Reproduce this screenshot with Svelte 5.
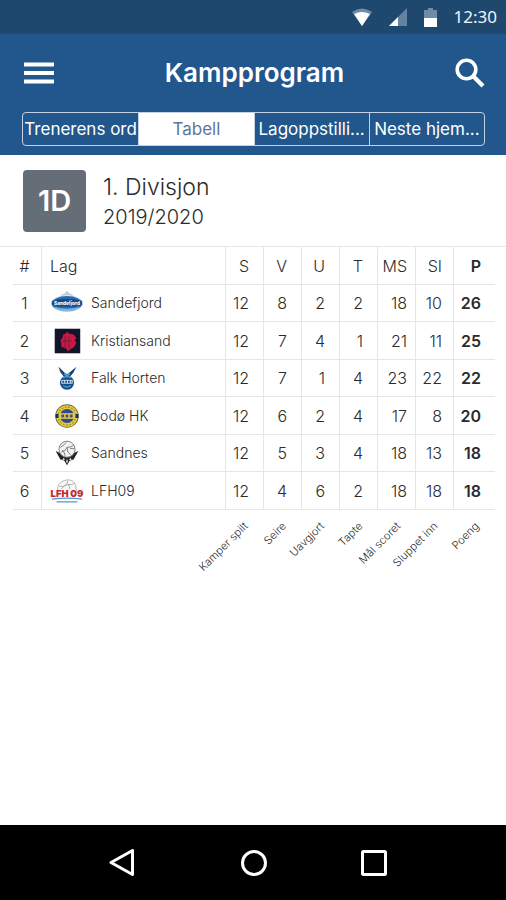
<script>
  let active = $state('Tabell');
  const tabs = ['Trenerens ord', 'Tabell', 'Lagoppstilli...', 'Neste hjem...'];
  const columns = [
    ['S', 'Kamper spilt'],
    ['V', 'Seire'],
    ['U', 'Uavgjort'],
    ['T', 'Tapte'],
    ['MS', 'Mål scoret'],
    ['SI', 'Sluppet inn'],
    ['P', 'Poeng']
  ];
  const teams = [
    { name: 'Sandefjord', stats: [12, 8, 2, 2, 18, 10, 26] },
    { name: 'Kristiansand', stats: [12, 7, 4, 1, 21, 11, 25] },
    { name: 'Falk Horten', stats: [12, 7, 1, 4, 23, 22, 22] },
    { name: 'Bodø HK', stats: [12, 6, 2, 4, 17, 8, 20] },
    { name: 'Sandnes', stats: [12, 5, 3, 4, 18, 13, 18] },
    { name: 'LFH09', stats: [12, 4, 6, 2, 18, 18, 18] }
  ];
</script>

{#snippet crest(i)}
  <svg class="crest" viewBox="0 0 36 28" aria-hidden="true">
    {#if i === 0}
      <path d="M12 5l3-1 3-3 3 3 3 1v5H12z" fill="#c3ced7" />
      <ellipse cx="18" cy="14.500" rx="17" ry="9" fill="#d5e6f2" />
      <ellipse cx="18" cy="14.500" rx="16" ry="8" fill="#246db0" />
      <path d="M4 18q14 4 28 0q-4 5-14 5T4 18z" fill="#7fb6dc" />
      <path d="M2 12q16-5 32 0v4q-16 4-32 0z" fill="#184984" />
      <text x="18" y="16" text-anchor="middle" font-size="5" font-weight="800" fill="#fff">Sandefjord</text>
    {:else if i === 1}
      <rect x="5" y="1" width="27" height="26" fill="#111529" />
      <path d="M18 4l2 2 5 1 3 4-2 2 2 3-3 5-4 2-2 2-2-3-5-2v-4l-1-3 2-2 1-4 3-1z" fill="#c51b43" />
      <path d="M16 9v13m4-13v5m0 2v6m-7-8h10" stroke="#711a35" stroke-width="1" />
    {:else if i === 2}
      <path d="M9 2l6 6 3 2 3-2 7-6-3 6-4 5h-6l-4-5z" fill="#153f76" />
      <circle cx="18" cy="19" r="7.500" fill="#174d8b" />
      <path d="M12 16h12v4H12z" fill="#d9e8f3" />
      <path d="M13 18h10" stroke="#174d8b" stroke-width="2" stroke-dasharray="2 1" />
      <path d="M14 22q4 3 8 0m-8-8q4-3 8 0" fill="none" stroke="#4b9ad0" stroke-width="1.500" />
      <path d="M15 9l3 3 3-3" stroke="#4c9ccf" stroke-width="2" fill="none" />
    {:else if i === 3}
      <circle cx="18" cy="14" r="12.500" fill="#706a45" />
      <circle cx="18" cy="14" r="11.500" fill="#e3cd37" />
      <circle cx="18" cy="14" r="9.500" fill="none" stroke="#a89736" stroke-dasharray="2 1.500" stroke-width="1.500" />
      <circle cx="18" cy="14" r="7.500" fill="#39468b" />
      <path d="M6 12h3v4H6zm21 0h3v4h-3z" fill="#202b73" />
      <path d="M10 11h16v6H10z" fill="#e4d04a" />
      <path d="M12 14h12" stroke="#4a5075" stroke-width="3" stroke-dasharray="3 1.500" />
    {:else if i === 4}
      <path d="M6 12l7 3 5 2 5-2 7-3-5 9-4 1-3 5-3-5-4-1z" fill="#222427" />
      <path d="M14 19l2 2-3 1zm8 0l-2 2 3 1zm-4 1l1 3-1 2-1-2z" fill="#ddd" />
      <circle cx="18" cy="10" r="8.500" fill="#f2f2f2" stroke="#77797b" />
      <path d="M11 8q5-3 6-5m-5 10q5-1 6-5 4 0 7-2m-7 2q0 6 4 8m-9-5q3 3 3 6m5-8q4 1 5 0" fill="none" stroke="#77797b" />
    {:else}
      <path d="M8 14Q7 6 15 3q8-3 12 4l1 7" fill="#f8f8f8" stroke="#b2b2b2" />
      <path d="M10 9q7 2 9-6m-7 9q2-4 7-5 4 1 7-1m-7 1q2 2 2 5" fill="none" stroke="#aaa" />
      <text x="18" y="20" text-anchor="middle" font-size="10" font-weight="900" fill="#c42832">LFH 09</text>
      <path d="M2 22.500q16-2 32 0M7 25.500h22" fill="none" stroke="#5396ce" stroke-width="1.300" />
    {/if}
  </svg>
{/snippet}

<div class="screen">
  <div class="status">
    <svg width="20" height="18" viewBox="0 0 20 18" aria-hidden="true"><path d="M0 4q10-7 20 0L10 18z" fill="#6f8ba8" /><path d="M2 6q8-4 16 0l-8 12z" fill="#fff" /></svg>
    <svg width="18" height="18" viewBox="0 0 18 18" aria-hidden="true"><path d="M18 0v18H0z" fill="#6482a1" /><path d="M9 9v9H0z" fill="#fff" /></svg>
    <svg width="13" height="19" viewBox="0 0 13 19" aria-hidden="true"><path d="M4 0h5v2h4v9H0V2h4z" fill="#6f8ba8" /><path d="M0 10h13v9H0z" fill="#fff" /></svg>
    <time>12:30</time>
  </div>

  <header>
    <div class="bar">
      <button aria-label="Meny"><svg width="30" height="22" viewBox="0 0 30 22"><path d="M0 2.500h30M0 11h30M0 19.500h30" stroke="#fff" stroke-width="4" /></svg></button>
      <h1>Kampprogram</h1>
      <button aria-label="Søk"><svg width="30" height="30" viewBox="0 0 30 30" fill="none" stroke="#fff"><circle cx="11.500" cy="11.500" r="9.300" stroke-width="3.600" /><path d="M18 18l10 10" stroke-width="4.200" /></svg></button>
    </div>
    <div class="tabs">
      {#each tabs as tab}
        <button class:active={active === tab} aria-pressed={active === tab} onclick={() => (active = tab)}>{tab}</button>
      {/each}
    </div>
  </header>

  <main>
    <section class="league">
      <div class="badge">1D</div>
      <div>
        <h2>1. Divisjon</h2>
        <p>2019/2020</p>
      </div>
    </section>
    <div class="standings">
      <table>
        <colgroup>
          <col class="c-rank" /><col />
          {#each columns as [short]}<col class={short === 'P' ? 'c-points' : 'c-stat'} />{/each}
        </colgroup>
        <thead>
          <tr>
            <th class="rank" scope="col">#</th>
            <th class="team" scope="col">Lag</th>
            {#each columns as [short]}
              <th class="stat" class:scored={short === 'MS'} class:conceded={short === 'SI'} class:points={short === 'P'} scope="col">{short}</th>
            {/each}
          </tr>
        </thead>
        <tbody>
          {#each teams as team, i}
            <tr>
              <td class="rank">{i + 1}</td>
              <td class="team"><div class="club">{@render crest(i)}<span>{team.name}</span></div></td>
              {#each team.stats as value, j}
                <td class="stat" class:scored={j === 4} class:conceded={j === 5} class:points={j === 6}>{value}</td>
              {/each}
            </tr>
          {/each}
        </tbody>
        <tfoot>
          <tr>
            <td colspan="2"></td>
            {#each columns as [, label]}
              <td class="legend"><span>{label}</span></td>
            {/each}
          </tr>
        </tfoot>
      </table>
    </div>
  </main>

  <nav>
    <button class="back" aria-label="Tilbake"><svg width="26" height="28" viewBox="0 0 26 28"><path d="M2 13.500L23.500 1.500v24z" /></svg></button>
    <button aria-label="Hjem"><svg width="26" height="28" viewBox="0 0 26 28"><circle cx="13" cy="14" r="11.500" /></svg></button>
    <button aria-label="Oversikt"><svg width="26" height="28" viewBox="0 0 26 28"><rect x="1.500" y="2.500" width="23" height="23" rx="1" /></svg></button>
  </nav>
</div>

<style>
  .screen {
    min-height: 100vh;
    display: flex;
    flex-direction: column;
    background: #fff;
    color: #2b2b2b;
    font-family: Inter, "Liberation Sans", sans-serif;
    font-weight: 300;
  }
  h1, h2, p { margin: 0; }
  button {
    padding: 0;
    border: 0;
    background: none;
    color: inherit;
    font: inherit;
    cursor: pointer;
  }
  svg { display: block; }

  .status {
    height: 34px;
    padding: 0 9px 0 0;
    display: flex;
    align-items: center;
    justify-content: flex-end;
    gap: 17px;
    background: #1f486f;
    color: #f2f5f8;
  }
  time { font: 400 17px/24px "Noto Sans", sans-serif; }

  header {
    padding: 0 21px 9px 22px;
    background: #22578d;
    color: #fff;
  }
  .bar {
    height: 78px;
    padding-left: 2px;
    display: flex;
    align-items: center;
    justify-content: space-between;
  }
  h1 { font-size: 26px; line-height: 32px; font-weight: 600; }
  .tabs {
    display: grid;
    grid-template-columns: repeat(4, minmax(0, 1fr));
    border: 1px solid #c3d2e4;
    border-radius: 4px;
    overflow: hidden;
  }
  .tabs button {
    height: 32px;
    font-size: 17px;
    font-weight: 400;
    white-space: nowrap;
  }
  .tabs button + button { border-left: 1px solid #c3d2e4; }
  .tabs .active { background: #fff; color: #5f759b; }

  main { flex: 1; }
  .league {
    display: flex;
    align-items: center;
    gap: 17px;
    height: 91px;
    padding: 0 23px;
  }
  .badge {
    width: 63px;
    height: 62px;
    display: grid;
    place-items: center;
    border-radius: 4px;
    background: #656d77;
    color: #fff;
    font-size: 29px;
    font-weight: 600;
  }
  h2 { font-size: 23px; line-height: 32px; font-weight: 300; }
  p { font-size: 20px; line-height: 28px; }

  .standings {
    padding: 0 11px 0 13px;
    border-top: 1px solid #e6e6e6;
  }
  table {
    width: 100%;
    table-layout: fixed;
    border-collapse: separate;
    border-spacing: 0;
    font-size: 16px;
    line-height: 20px;
  }
  .c-rank { width: 29px; }
  .c-stat { width: 38px; }
  .c-points { width: 41px; }
  tr { height: 38px; }
  tbody tr:nth-child(odd) { height: 37px; }
  th, td {
    box-sizing: border-box;
    padding: 0;
    font-weight: 300;
  }
  thead th, tbody td { border-bottom: 1px solid #e6e6e6; border-right: 1px solid #e6e6e6; }
  .rank { padding-right: 5px; text-align: center; }
  .team { padding-left: 8px; text-align: left; }
  .stat { padding-right: 14px; text-align: right; }
  .scored { padding-right: 8px; }
  .conceded { padding-right: 11px; }
  .points { border-right: 0; font-weight: 600; }
  .club {
    display: flex;
    align-items: center;
    gap: 7px;
    font-size: 14px;
  }
  .crest { width: 34px; height: 28px; }

  .legend { position: relative; }
  .legend span {
    position: absolute;
    top: 9px;
    right: 23px;
    font-size: 11px;
    line-height: 14px;
    white-space: nowrap;
    transform: rotate(-45deg);
    transform-origin: top right;
  }

  nav {
    height: 75px;
    padding-right: 10px;
    display: flex;
    align-items: center;
    justify-content: center;
    gap: 94px;
    background: #000;
  }
  nav .back { margin-right: 12px; }
  nav svg { fill: none; stroke: #fff; stroke-width: 3; stroke-linejoin: round; }
</style>
